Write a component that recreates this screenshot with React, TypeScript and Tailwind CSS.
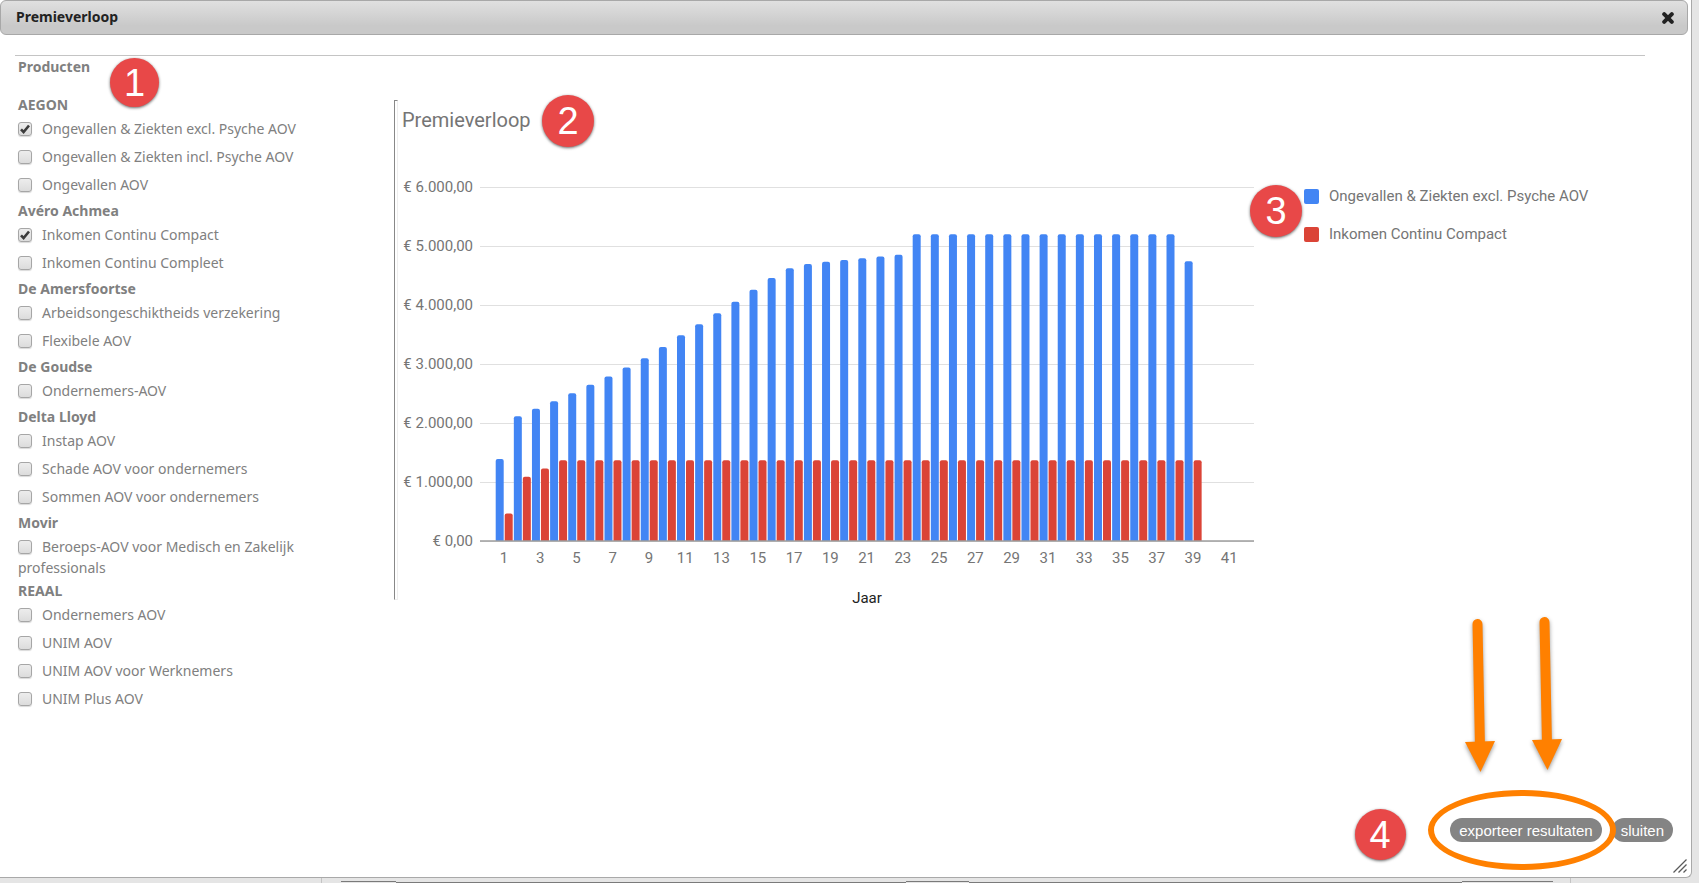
import { useState } from "react";

const groups = [
    { name: "AEGON", products: ["Ongevallen & Ziekten excl. Psyche AOV", "Ongevallen & Ziekten incl. Psyche AOV", "Ongevallen AOV"] },
    { name: "Avéro Achmea", products: ["Inkomen Continu Compact", "Inkomen Continu Compleet"] },
    { name: "De Amersfoortse", products: ["Arbeidsongeschiktheids verzekering", "Flexibele AOV"] },
    { name: "De Goudse", products: ["Ondernemers-AOV"] },
    { name: "Delta Lloyd", products: ["Instap AOV", "Schade AOV voor ondernemers", "Sommen AOV voor ondernemers"] },
    { name: "Movir", products: ["Beroeps-AOV voor Medisch en Zakelijk professionals"] },
    { name: "REAAL", products: ["Ondernemers AOV", "UNIM AOV", "UNIM AOV voor Werknemers", "UNIM Plus AOV"] },
];

// premie per jaar, in euro
const aegon = [
    1390, 2115, 2245, 2370, 2505, 2650, 2790, 2945, 3100, 3290, 3490, 3675, 3865, 4060, 4260, 4460, 4625, 4700, 4735, 4765,
    4795, 4825, 4855, ...Array(15).fill(5205), 4745,
];
const avero = [465, 1090, 1230, ...Array(36).fill(1370)];

const LEFT = 82;
const RIGHT = 856;
const BASE = 441;
const PITCH = 18.13;

const yFor = (value: number) => BASE - value * 0.05895;

const barPath = (x: number, value: number) => {
    const y = yFor(value);
    return `M${x} ${BASE}V${y + 2}q0 -2 2 -2h4q2 0 2 2V${BASE}z`;
};

const Chart = () => (
    <svg width="880" height="510" className="shrink-0 font-[Roboto,sans-serif]" role="img" aria-label="Premieverloop">
        <text x="4" y="27" fontSize="20" fill="#757575">Premieverloop</text>
        {[6, 5, 4, 3, 2, 1, 0].map((n) => (
            <g key={n}>
                <rect x={LEFT} y={Math.round(yFor(n * 1000))} width={RIGHT - LEFT} height="1" fill="#e0e0e0" />
                <text x="75" y={Math.round(yFor(n * 1000)) + 5} fontSize="15" textAnchor="end" fill="#757575">
                    {n === 0 ? "€ 0,00" : `€ ${n}.000,00`}
                </text>
            </g>
        ))}
        {aegon.map((value, i) => (
            <path key={i} d={barPath(97.7 + i * PITCH, value)} fill="#4285f4" />
        ))}
        {avero.map((value, i) => (
            <path key={i} d={barPath(106.7 + i * PITCH, value)} fill="#db4437" />
        ))}
        <rect x={LEFT} y={BASE - 1} width={RIGHT - LEFT} height="2" fill="#9e9e9e" fillOpacity="0.75" />
        {Array.from({ length: 21 }, (_, i) => (
            <text key={i} x={106 + i * 2 * PITCH} y="463" fontSize="15" textAnchor="middle" fill="#757575">{i * 2 + 1}</text>
        ))}
        <text x="469" y="503" fontSize="15" textAnchor="middle" fill="#222222">Jaar</text>
    </svg>
);

const LegendItem = ({ color, label }: { color: string; label: string }) => (
    <li className="flex items-center gap-[10px] leading-5">
        <span className={`size-[15px] shrink-0 rounded-xs ${color}`} />
        {label}
    </li>
);

const Badge = ({ n, className }: { n: number; className: string }) => (
    <span
        className={`absolute flex items-center justify-center rounded-full bg-[#e84848] font-['Liberation_Sans',Arial,sans-serif] text-[38px] leading-none text-white shadow-[0_1px_3px_rgba(0,0,0,0.6)] ${className}`}
    >
        {n}
    </span>
);

const Product = ({ label, checked, onChange }: { label: string; checked: boolean; onChange: () => void }) => (
    <label className="block min-h-7 pt-[3px] pb-px leading-[21px]">
        <span className="relative mr-[10px] inline-block size-[14px] align-[-2px]">
            <input
                type="checkbox"
                checked={checked}
                onChange={onChange}
                className="block size-[14px] appearance-none rounded-[3px] border border-[#a6a6a6] bg-linear-to-b from-[#ededed] to-[#dcdcdc] shadow-[0_1px_1px_rgba(0,0,0,0.15)]"
            />
            {checked && (
                <svg viewBox="0 0 14 14" className="pointer-events-none absolute inset-0 size-[14px]">
                    <path d="M3 7.3l2.6 2.7L11 3.5" fill="none" stroke="#3c3c3c" strokeWidth="2.6" />
                </svg>
            )}
        </span>
        {label}
    </label>
);

const Pointers = () => (
    <svg width="200" height="260" className="pointer-events-none absolute right-[65px] bottom-0 drop-shadow-[0_2px_2px_rgba(0,0,0,0.4)]">
        <g fill="#ff8000">
            <path d="M51.5 7L54 131" stroke="#ff8000" strokeWidth="10" strokeLinecap="round" />
            <path d="M39 125L69 124L54.5 155z" />
            <path d="M118.5 5L121 128" stroke="#ff8000" strokeWidth="10" strokeLinecap="round" />
            <path d="M106 123L136 122L121.5 153z" />
        </g>
    </svg>
);

const App = () => {
    const [selected, setSelected] = useState(["Ongevallen & Ziekten excl. Psyche AOV", "Inkomen Continu Compact"]);

    const toggle = (product: string) =>
        setSelected(selected.includes(product) ? selected.filter((p) => p !== product) : [...selected, product]);

    return (
        <div className="flex min-h-screen flex-col bg-[#e5e5e5] font-['Noto_Sans',sans-serif] text-sm text-[#808080]">
            <section className="relative mr-[7px] flex flex-1 flex-col rounded-br-md border-r border-b border-[#a9a9a9] bg-white">
                <header className="mr-[3px] flex h-[35px] items-center justify-between rounded-md border border-[#a8a8a8] bg-linear-to-b from-[#e0e0e0] to-[#c9c9c9] to-75% pr-3 pl-[15px]">
                    <h1 className="pb-px font-bold text-[#222222]">Premieverloop</h1>
                    <button type="button" aria-label="Sluiten" className="p-px">
                        <svg width="12" height="12" viewBox="0 0 12 12">
                            <path d="M2.2 2.2l7.6 7.6M9.8 2.2l-7.6 7.6" stroke="#222222" strokeWidth="4" strokeLinecap="round" />
                        </svg>
                    </button>
                </header>

                <div className="mt-5 mr-[46px] ml-[15px] border-t border-[#c4c4c4]">
                    <div className="relative pt-px pl-[3px]">
                        <h2 className="leading-5 font-bold">Producten</h2>
                        <Badge n={1} className="top-[2px] left-[95px] size-[49px]" />
                    </div>

                    <div className="mt-4 flex items-start">
                        <div className="w-[300px] shrink-0 pl-[3px]">
                            {groups.map((group) => (
                                <fieldset key={group.name}>
                                    <legend className="pt-[2px] leading-5 font-bold">{group.name}</legend>
                                    {group.products.map((product) => (
                                        <Product
                                            key={product}
                                            label={product}
                                            checked={selected.includes(product)}
                                            onChange={() => toggle(product)}
                                        />
                                    ))}
                                </fieldset>
                            ))}
                        </div>

                        <div className="mt-[7px] ml-[79px] h-[500px] w-1 shrink-0 border border-t-[#888888] border-r-[#eeeeee] border-b-[#eeeeee] border-l-[#888888]" />

                        <div className="relative mt-[7px] flex shrink-0">
                            <Chart />
                            <ul className="mt-[86px] ml-[26px] flex flex-col gap-[18px] font-[Roboto,sans-serif] text-[15px] text-[#757575]">
                                <LegendItem color="bg-[#4285f4]" label="Ongevallen & Ziekten excl. Psyche AOV" />
                                <LegendItem color="bg-[#db4437]" label="Inkomen Continu Compact" />
                            </ul>
                            <Badge n={2} className="-top-[5px] left-36 size-[52px]" />
                            <Badge n={3} className="top-[85px] left-[852px] size-[52px]" />
                        </div>
                    </div>
                </div>

                <footer className="mt-auto flex justify-end gap-[10px] pr-[18px] pb-[35px] font-['Liberation_Sans',Arial,sans-serif] text-[15px] text-white">
                    <div className="relative z-10">
                        <button type="button" className="h-6 rounded-full bg-[#848484] px-[9px] pt-[2px] leading-5">exporteer resultaten</button>
                        <span className="pointer-events-none absolute -top-7 -right-[14px] -bottom-7 -left-[22px] rounded-[50%] border-6 border-[#ff8000]" />
                        <Badge n={4} className="-top-[9px] right-[196px] size-[51px]" />
                    </div>
                    <button type="button" className="h-6 rounded-full bg-[#848484] px-[9px] pt-[2px] leading-5">sluiten</button>
                </footer>

                <Pointers />

                <svg width="14" height="14" viewBox="0 0 14 14" className="absolute right-1 bottom-1 cursor-se-resize">
                    <path d="M0.5 13.5L13.5 0.5M5.5 13.5L13.5 5.5M10.5 13.5L13.5 10.5" stroke="#5a5a5a" strokeWidth="1.3" />
                </svg>
            </section>

            {/* rand van de pagina onder het venster */}
            <div className="flex h-[5px] items-end">
                <div className="h-full w-[322px] border-r border-[#c4c4c4]" />
                <div className="ml-[19px] h-[2px] w-[55px] border-t border-[#7a7a7a]" />
                <div className="h-px w-[510px] bg-[#7a7a7a]" />
                <div className="h-[2px] w-[63px] border-t border-[#7a7a7a]" />
                <div className="h-px flex-1 bg-[#7a7a7a]" />
                <div className="h-[2px] w-[91px] border-t border-[#7a7a7a]" />
                <div className="mr-32 h-full w-[18px] border-r border-[#c4c4c4]" />
            </div>
        </div>
    );
};

export default App;
